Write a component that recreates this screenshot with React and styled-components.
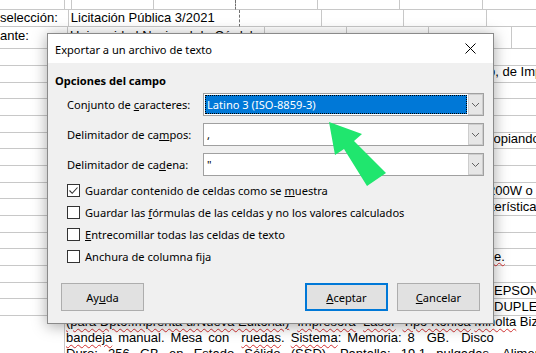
import React from "react";
import styled, { createGlobalStyle } from "styled-components";

const GlobalStyle = createGlobalStyle`
  html, body {
    margin: 0;
    padding: 0;
    background: #ffffff;
  }
  body {
    width: 536px;
    height: 353px;
    overflow: hidden;
  }
`;

// columnas de la hoja: A..G
const COLS = [65, 89, 82, 82, 82, 83, 60];

const rowHeights = [17, 17, 16, 17, 17, 16, 17, 17, 16, 17, 17, 16, 17, 17, 16, 17];

// texto de la columna G (lo que asoma a la derecha del diálogo)
const rightTexts = {
  1: { text: "o, de Impresión", pad: 5, up: 5 },
  5: { text: "copiando", pad: 4, up: 3 },
  8: { text: "200W o ", pad: 5, tail: "c" },
  9: { text: "terísticas", pad: 8 },
  12: { text: "e.", pad: 11, squiggle: true },
  14: { text: "EPSON", pad: 11 },
  15: { text: "DUPLEX", pad: 11 },
};

const Mn = ({ children }) => <u>{children}</u>;

const Chevron = () => (
  <svg width="9" height="6" viewBox="0 0 9 6">
    <path d="M1 1 L4.5 4.5 L8 1" fill="none" stroke="#606060" strokeWidth="1" />
  </svg>
);

const App = () => {
  return (
    <>
      <GlobalStyle />
      <Screen>
        <Sheet>
          <SheetRow $h={10}>
            <Cell $w={65} />
            <Cell $w={7} />
            <Cell $w={82} />
            <Cell $w={82} $dashed />
            <Cell $w={82} />
            <Cell $w={82} />
            <Cell $w={83} />
            <Cell $w={60} />
          </SheetRow>
          <SheetRow $h={17}>
            <Cell $w={65} $right $pad={10}>
              selección:
            </Cell>
            <Cell $w={171} $dashed>
              Licitación Pública 3/2021
            </Cell>
            <Cell $w={82} />
            <Cell $w={82} />
            <Cell $w={83} />
            <Cell $w={60} />
          </SheetRow>
          <SheetRow $h={22}>
            <Cell $w={65} $right $pad={38} $up={3}>
              ante:
            </Cell>
            <Cell $w={171} $up={3}>
              Universidad Nacional de Córdoba
            </Cell>
            <Cell $w={82} />
            <Cell $w={82} />
            <Cell $w={83} />
            <Cell $w={60} />
          </SheetRow>
          {rowHeights.map((h, i) => {
            const r = rightTexts[i];
            return (
              <SheetRow key={i} $h={h}>
                {COLS.slice(0, 6).map((w, j) => (
                  <Cell key={j} $w={w} />
                ))}
                <Cell $w={60} $pad={r ? r.pad : 2} $up={r && r.up ? r.up : 0}>
                  {r && (
                    <SheetText $squiggle={r.squiggle}>
                      {r.text}
                      {r.tail && <Flag>{r.tail}</Flag>}
                    </SheetText>
                  )}
                </Cell>
              </SheetRow>
            );
          })}
          <SheetRow $h={40}>
            <Cell $w={65} $open />
            <Cell $w={89} $open $multi>
              <WrapLine $ws={0}>
                <Sq>(para Dpto.Imprenta u/Nueva Editorial)</Sq> -<Sq>Impresora</Sq>  <Sq>Laser</Sq>  <Sq>Tipo Konica</Sq> <Sq>Minolta</Sq> Biz
              </WrapLine>
              <WrapLine $ws={2.4}>
                <Sq>bandeja</Sq> manual. Mesa con  <Sq>ruedas</Sq>. <Sq>Sistema</Sq>: Memoria: 8  GB.  Disco
              </WrapLine>
              <WrapLine $ws={1.5}>
                <Sq>Duro</Sq>:  256  GB  en  <Sq>Estado</Sq>  <Sq>Sólido</Sq>  (SSD).  Pantalla:  19.1  pulgadas.  Alimentación
              </WrapLine>
            </Cell>
            <Cell $w={164} $open />
            <Cell $w={82} $open />
            <Cell $w={143} $open $noRight />
          </SheetRow>
        </Sheet>

        <Dialog>
          <TitleBar>
            <Title>Exportar a un archivo de texto</Title>
            <CloseButton>
              <svg width="11" height="11" viewBox="0 0 11 11">
                <path d="M0.5 0.5 L10.5 10.5 M10.5 0.5 L0.5 10.5" stroke="#000" strokeWidth="1" />
              </svg>
            </CloseButton>
          </TitleBar>
          <Body>
            <SectionTitle>Opciones del campo</SectionTitle>
            <Fields>
              <FieldRow>
                <FieldLabel>
                  Conjunto de <Mn>c</Mn>aracteres:
                </FieldLabel>
                <Combo>
                  <ComboValue $active>Latino 3 (ISO-8859-3)</ComboValue>
                  <ComboButton>
                    <Chevron />
                  </ComboButton>
                </Combo>
              </FieldRow>
              <FieldRow>
                <FieldLabel>
                  Delimitador de ca<Mn>m</Mn>pos:
                </FieldLabel>
                <Combo>
                  <ComboValue>,</ComboValue>
                  <ComboButton>
                    <Chevron />
                  </ComboButton>
                </Combo>
              </FieldRow>
              <FieldRow>
                <FieldLabel>
                  Delimitador de ca<Mn>d</Mn>ena:
                </FieldLabel>
                <Combo>
                  <ComboValue>"</ComboValue>
                  <ComboButton>
                    <Chevron />
                  </ComboButton>
                </Combo>
              </FieldRow>
            </Fields>
            <Checks>
              <CheckRow>
                <CheckBox>
                  <svg width="11" height="11" viewBox="0 0 11 11">
                    <path d="M1.5 5.5 L4.2 8.3 L9.5 2.5" fill="none" stroke="#333" strokeWidth="1.1" />
                  </svg>
                </CheckBox>
                <CheckLabel>
                  Guardar contenido de celdas como se <Mn>m</Mn>uestra
                </CheckLabel>
              </CheckRow>
              <CheckRow>
                <CheckBox />
                <CheckLabel>
                  Guardar las <Mn>f</Mn>órmulas de las celdas y no los valores calculados
                </CheckLabel>
              </CheckRow>
              <CheckRow>
                <CheckBox />
                <CheckLabel>
                  <Mn>E</Mn>ntrecomillar todas las celdas de texto
                </CheckLabel>
              </CheckRow>
              <CheckRow>
                <CheckBox />
                <CheckLabel>Anchura de columna fija</CheckLabel>
              </CheckRow>
            </Checks>
            <ButtonBar>
              <DlgButton>
                Ay<Mn>u</Mn>da
              </DlgButton>
              <Spacer />
              <DlgButton $default>
                <Mn>A</Mn>ceptar
              </DlgButton>
              <DlgButton>
                <Mn>C</Mn>ancelar
              </DlgButton>
            </ButtonBar>
          </Body>
        </Dialog>

        <Arrow width="66" height="72" viewBox="0 0 66 72">
          <polygon
            points="4,4 37,16 29,23 61,55 42,68 19,31 10,37"
            fill="#20e66e"
          />
        </Arrow>
      </Screen>
    </>
  );
};

export default App;

const Screen = styled.div`
  position: relative;
  width: 536px;
  height: 353px;
  overflow: hidden;
  background: #fff;
`;

const Sheet = styled.div`
  display: flex;
  flex-direction: column;
  font-family: "Liberation Sans", Arial, sans-serif;
  font-size: 13px;
  color: #000;
`;

const SheetRow = styled.div`
  display: flex;
  height: ${({ $h }) => $h}px;
  flex-shrink: 0;
`;

const Cell = styled.div`
  box-sizing: border-box;
  flex: 0 0 ${({ $w }) => $w}px;
  display: flex;
  flex-direction: ${({ $multi }) => ($multi ? "column" : "row")};
  align-items: ${({ $multi }) => ($multi ? "flex-start" : "center")};
  justify-content: ${({ $right }) => ($right ? "flex-end" : "flex-start")};
  padding: ${({ $right, $pad = 2, $multi, $up = 0 }) =>
    $right
      ? `0 ${$pad}px ${$up}px 0`
      : $multi
      ? `0 0 0 1px`
      : `0 0 ${$up}px ${$pad}px`};
  white-space: pre;
  overflow: visible;
  line-height: 16px;
  border-right: 1px ${({ $dashed }) => ($dashed ? "dashed #707070" : "solid #c8c8c8")};
  ${({ $noRight }) => $noRight && "border-right: none;"}
  border-bottom: ${({ $open }) => ($open ? "none" : "1px solid #c8c8c8")};
`;

const SheetText = styled.span`
  white-space: pre;
  text-decoration: ${({ $squiggle }) => ($squiggle ? "underline wavy #d23030" : "none")};
  text-decoration-thickness: 1px;
`;

const Flag = styled.span`
  color: #e0a020;
`;

const WrapLine = styled.div`
  white-space: pre;
  height: 16px;
  line-height: 16px;
  word-spacing: ${({ $ws }) => $ws}px;
  &:first-child {
    margin-top: -2px;
  }
`;

const Sq = styled.span`
  text-decoration: underline wavy #d23030;
  text-decoration-thickness: 1px;
  text-underline-offset: 2px;
`;

const Dialog = styled.div`
  position: absolute;
  left: 47px;
  top: 33px;
  width: 447px;
  height: 291px;
  box-sizing: border-box;
  border: 1px solid #8a8a8a;
  box-shadow: 0 2px 14px rgba(0, 0, 0, 0.35);
  background: #f0f0f0;
  display: flex;
  flex-direction: column;
  font-family: "Noto Sans", "Segoe UI", sans-serif;
  font-size: 11.1px;
  color: #000;
`;

const TitleBar = styled.div`
  height: 29px;
  background: #fff;
  display: flex;
  align-items: center;
  padding: 0 0 0 7px;
`;

const Title = styled.div`
  flex: 1;
  padding-top: 1px;
`;

const CloseButton = styled.div`
  width: 46px;
  height: 29px;
  display: flex;
  align-items: center;
  justify-content: center;
`;

const Body = styled.div`
  flex: 1;
  display: flex;
  flex-direction: column;
  padding: 9px 8px 12px 7px;
`;

const SectionTitle = styled.div`
  font-weight: bold;
  height: 18px;
  line-height: 18px;
`;

const Fields = styled.div`
  display: flex;
  flex-direction: column;
  gap: 7px;
  margin-top: 3px;
  padding-left: 12px;
`;

const FieldRow = styled.div`
  display: flex;
  align-items: center;
  height: 23px;
`;

const FieldLabel = styled.div`
  width: 136px;
`;

const Combo = styled.div`
  flex: 0 0 281px;
  height: 23px;
  box-sizing: border-box;
  border: 1px solid #a0a0a0;
  background: #fff;
  display: flex;
  padding: 1px;
`;

const ComboValue = styled.div`
  flex: 1;
  display: flex;
  align-items: center;
  padding-left: 2px;
  box-sizing: border-box;
  ${({ $active }) =>
    $active &&
    `
    background: #0078d7;
    color: #fff;
    outline: 1px dotted #000;
    outline-offset: -1px;
  `}
`;

const ComboButton = styled.div`
  flex: 0 0 15px;
  box-sizing: border-box;
  border: 1px solid #cdcdcd;
  background: #e6e6e6;
  display: flex;
  align-items: center;
  justify-content: center;
  margin: -1px -1px -1px 1px;
`;

const Checks = styled.div`
  display: flex;
  flex-direction: column;
  gap: 8.3px;
  margin-top: 7px;
  padding-left: 12px;
`;

const CheckRow = styled.div`
  display: flex;
  align-items: center;
  height: 14px;
  gap: 5px;
`;

const CheckBox = styled.div`
  width: 13px;
  height: 13px;
  box-sizing: border-box;
  border: 1px solid #333;
  background: #fff;
  display: flex;
  align-items: center;
  justify-content: center;
`;

const CheckLabel = styled.div``;

const ButtonBar = styled.div`
  margin-top: auto;
  display: flex;
  gap: 9px;
  padding-left: 6px;
  padding-right: 5px;
`;

const Spacer = styled.div`
  flex: 1;
`;

const DlgButton = styled.div`
  width: 83px;
  height: 28px;
  box-sizing: border-box;
  border: ${({ $default }) => ($default ? "2px solid #0078d7" : "1px solid #adadad")};
  background: #e1e1e1;
  display: flex;
  align-items: center;
  justify-content: center;
`;

const Arrow = styled.svg`
  position: absolute;
  left: 325px;
  top: 118px;
`;
